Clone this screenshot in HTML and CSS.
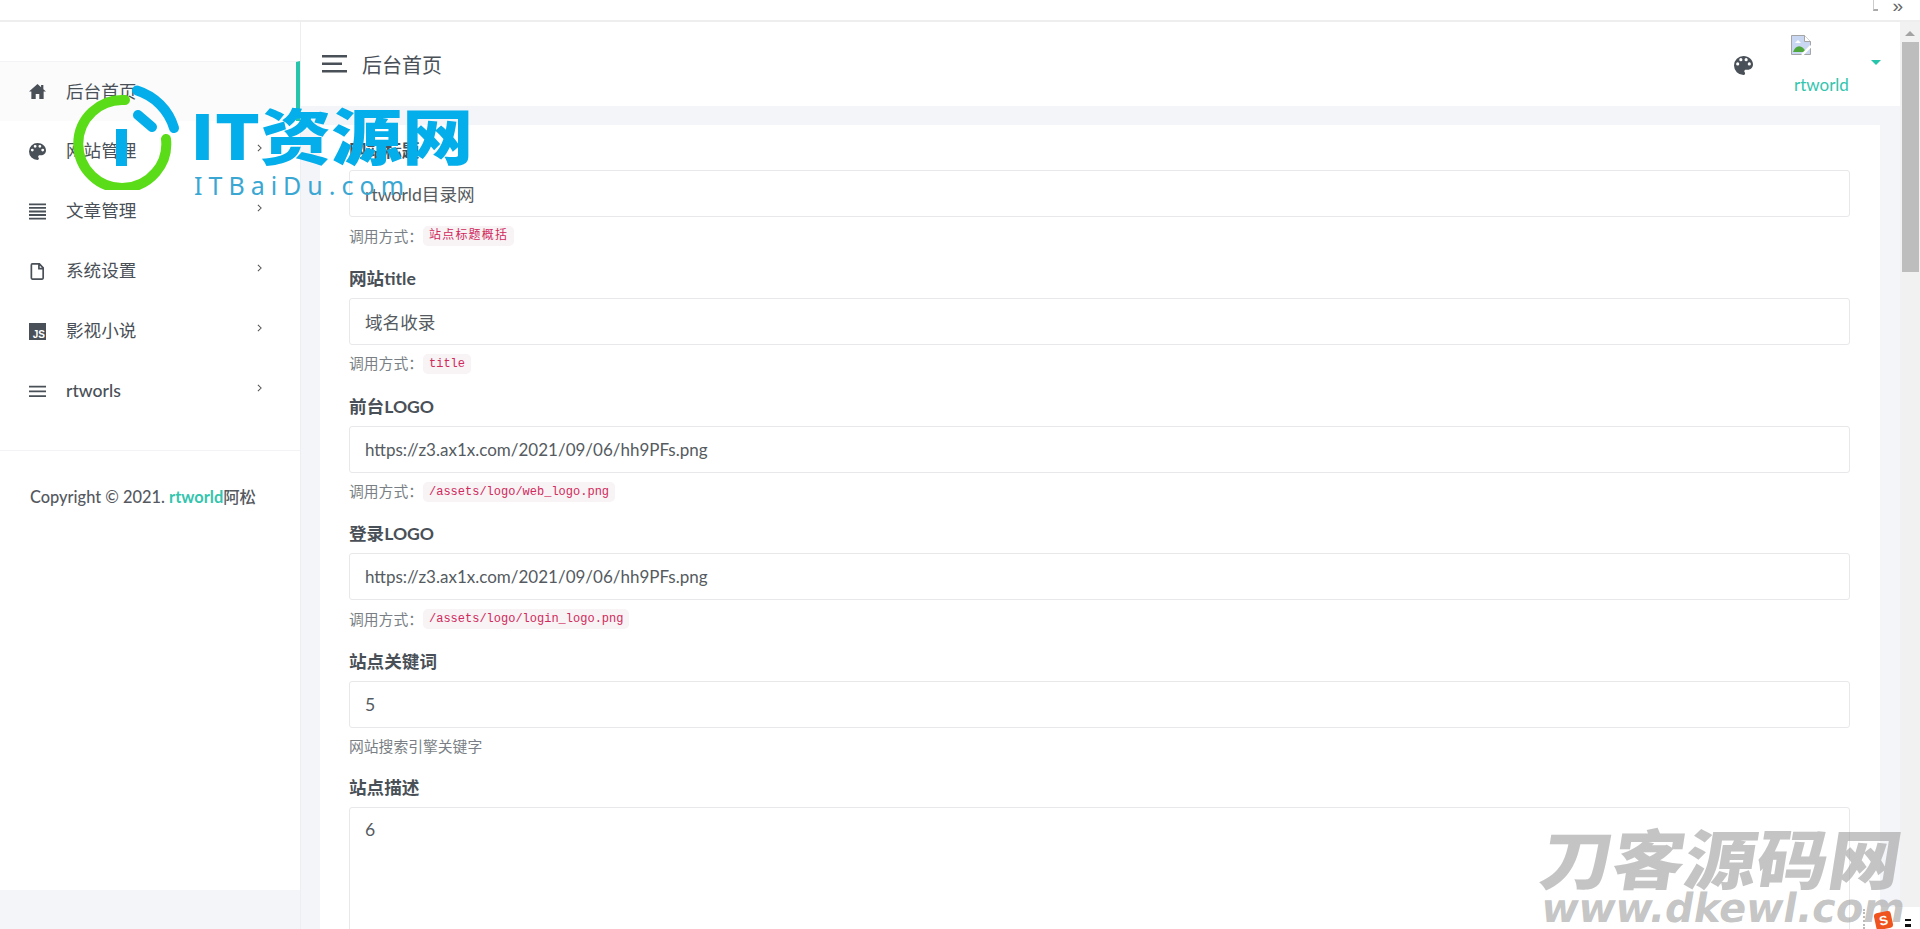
FILE: index.html
```html
<!DOCTYPE html>
<html lang="zh-CN">
<head>
<meta charset="utf-8">
<title>后台首页</title>
<link rel="stylesheet" href="styles.css">
</head>
<body>
<svg class="defs" width="0" height="0" aria-hidden="true">
  <symbol id="palette" viewBox="3 3 18 18"><path fill-rule="evenodd" d="M12 3a9 9 0 0 0 0 18c.83 0 1.5-.67 1.5-1.5 0-.39-.15-.74-.39-1.01-.23-.26-.38-.61-.38-.99 0-.83.67-1.5 1.5-1.5H16c2.76 0 5-2.24 5-5 0-4.42-4.03-8-9-8zm-5.5 9a1.5 1.5 0 1 1 0-3 1.5 1.5 0 0 1 0 3zm3-4a1.5 1.5 0 1 1 0-3 1.5 1.5 0 0 1 0 3zm5 0a1.5 1.5 0 1 1 0-3 1.5 1.5 0 0 1 0 3zm3 4a1.5 1.5 0 1 1 0-3 1.5 1.5 0 0 1 0 3z"/></symbol>
  <symbol id="chev" viewBox="0 0 6 10"><path d="M1 1l4 4-4 4" fill="none" stroke="#555" stroke-width="1.3"/></symbol>
</svg>
<div class="app">
  <div class="topbar">
    <span class="topbar-glitch"></span>
    <span class="topbar-more">»</span>
  </div>
  <div class="body-row">
    <aside class="sidebar">
      <div class="sidebar-panel">
        <nav class="nav">
          <a class="nav-item active">
            <svg class="nav-icon" viewBox="0 0 18 16"><path d="M9 0L0 8h2.5v8h4.600v-5.400h3.800V16h4.600V8H18l-2.800-2.500V1h-2.400v2.400z"/></svg>
            <span class="nav-text">后台首页</span>
          </a>
          <a class="nav-item">
            <svg class="nav-icon"><use href="#palette"/></svg>
            <span class="nav-text">网站管理</span>
            <svg class="chev"><use href="#chev"/></svg>
          </a>
          <a class="nav-item">
            <svg class="nav-icon" viewBox="0 0 18 17"><path d="M0 0h18v2H0zM0 3.700h18v2H0zM0 7.500h18v2H0zM0 11.200h18v2H0zM0 15h18v2H0z"/></svg>
            <span class="nav-text">文章管理</span>
            <svg class="chev"><use href="#chev"/></svg>
          </a>
          <a class="nav-item">
            <svg class="nav-icon" viewBox="0 0 18 18"><path d="M3.500 1h7.500l4 4.200V16a1 1 0 0 1-1 1H3.500a1 1 0 0 1-1-1V2a1 1 0 0 1 1-1zM10.500 1.500V6H15" fill="none" stroke="#495057" stroke-width="1.800"/></svg>
            <span class="nav-text">系统设置</span>
            <svg class="chev"><use href="#chev"/></svg>
          </a>
          <a class="nav-item">
            <span class="js-icon">JS</span>
            <span class="nav-text">影视小说</span>
            <svg class="chev"><use href="#chev"/></svg>
          </a>
          <a class="nav-item">
            <svg class="nav-icon" viewBox="0 0 18 12"><path d="M0 0h18v1.800H0zM0 5h18v1.800H0zM0 10h18v1.800H0z"/></svg>
            <span class="nav-text nav-latin">rtworls</span>
            <svg class="chev"><use href="#chev"/></svg>
          </a>
        </nav>
        <div class="copyright">Copyright © 2021. <span class="copyright-brand">rtworld</span>阿松</div>
      </div>
    </aside>
    <main class="main">
      <header class="header">
        <svg class="burger" viewBox="0 0 25 18"><path d="M0 0h25v2.400H0zM0 7.500h20v2.400H0zM0 15h25v2.400H0z"/></svg>
        <span class="header-title">后台首页</span>
        <svg class="header-palette"><use href="#palette"/></svg>
        <div class="user">
          <svg class="broken-img" viewBox="0 0 20 20">
            <path d="M.5.5h13l6 6v13H.5z" fill="#c9d7f2" stroke="#a5a5a5"/>
            <path d="M13.500.500v6h6" fill="#fff" stroke="#a5a5a5"/>
            <path d="M2 17c2-6 7-8 11-3l2 3z" fill="#4fa83d"/>
            <path d="M4 8l3-3 3 3z" fill="#fff"/>
            <path d="M11 20L20 11" stroke="#fff" stroke-width="2.500"/>
          </svg>
          <span class="user-name">rtworld</span>
        </div>
        <span class="caret"></span>
      </header>
      <div class="content">
        <form class="card">
          <div class="field">
            <label class="field-label">网站标题</label>
            <input class="field-input" value="rtworld目录网">
            <div class="help">调用方式：<code class="chip chip-cjk">站点标题概括</code></div>
          </div>
          <div class="field">
            <label class="field-label">网站title</label>
            <input class="field-input" value="域名收录">
            <div class="help">调用方式：<code class="chip">title</code></div>
          </div>
          <div class="field">
            <label class="field-label">前台LOGO</label>
            <input class="field-input field-url" value="https://z3.ax1x.com/2021/09/06/hh9PFs.png">
            <div class="help">调用方式：<code class="chip">/assets/logo/web_logo.png</code></div>
          </div>
          <div class="field">
            <label class="field-label">登录LOGO</label>
            <input class="field-input field-url" value="https://z3.ax1x.com/2021/09/06/hh9PFs.png">
            <div class="help">调用方式：<code class="chip">/assets/logo/login_logo.png</code></div>
          </div>
          <div class="field">
            <label class="field-label">站点关键词</label>
            <input class="field-input" value="5">
            <div class="help help-plain">网站搜索引擎关键字</div>
          </div>
          <div class="field">
            <label class="field-label">站点描述</label>
            <textarea class="field-textarea">6</textarea>
          </div>
        </form>
      </div>
    </main>
    <div class="scrollbar">
      <span class="scroll-up"></span>
      <span class="scroll-thumb"></span>
    </div>
  </div>

  <div class="logo-mark">
    <svg class="logo-icon" width="130" height="110" viewBox="60 80 130 110">
      <path d="M125 100A44 44 0 1 0 166 139" fill="none" stroke="#5bdc18" stroke-width="10" stroke-linecap="round"/>
      <path d="M137 90.500A56 56 0 0 1 174 128" fill="none" stroke="#03aeea" stroke-width="10" stroke-linecap="round"/>
      <path d="M138 115L152 127" fill="none" stroke="#03aeea" stroke-width="10" stroke-linecap="round"/>
      <path d="M116 129h11v37h-11z" fill="#03aeea"/>
    </svg>
    <div class="logo-title">IT资源网</div>
    <div class="logo-sub">ITBaiDu.com</div>
  </div>

  <div class="ime-back"></div>

  <div class="wm">
    <div class="wm-title">刀客源码网</div>
    <div class="wm-url">www.dkewl.com</div>
  </div>

  <div class="ime">
    <span class="ime-dots"></span>
    <span class="ime-s">S</span>
    <span class="ime-arrows"></span>
  </div>
</div>
</body>
</html>
```
FILE: styles.css
```css
* { box-sizing: border-box; }
html, body { margin: 0; height: 100%; overflow: hidden; }
body {
  font-family: "Lato", "Noto Sans CJK SC", sans-serif;
  color: #495057;
  background: #fff;
}
.defs { position: absolute; }
.app { position: relative; width: 1920px; height: 929px; overflow: hidden; display: flex; flex-direction: column; }

.topbar { height: 22px; border-bottom: 2px solid #eeeeee; background: #fff; display: flex; justify-content: flex-end; align-items: flex-start; padding-right: 17px; gap: 14px; }
.topbar-glitch { width: 5px; height: 11px; border-left: 1px solid #ccc; border-bottom: 2px solid #aaa; }
.topbar-more { font: 19px/12px "Liberation Sans", sans-serif; color: #666; }

.body-row { flex: 1; display: flex; min-height: 0; }

.sidebar { width: 301px; flex: none; background: #f4f5f9; border-right: 1px solid #eceef3; }
.sidebar-panel { height: 868px; background: #fff; padding-top: 39px; }
.nav { padding-bottom: 29px; border-bottom: 1px solid #f3f3f5; }
.nav-item { height: 60px; display: flex; align-items: center; padding: 0 29px; position: relative; color: #495057; }
.nav-item.active { background: #fbfbfc; border-top: 1px solid #f3f3f5; border-right: 4px solid #27c4ac; }
.nav-icon { width: 17px; height: 17px; fill: #495057; flex: none; }
.nav-text { margin-left: 20px; font-size: 17.6px; flex: 1; line-height: 24px; }
.nav-latin { font-weight: 500; }
.chev { width: 5px; height: 8px; flex: none; margin: -6px 9px 0 0; }
.js-icon { width: 17px; height: 17px; flex: none; background: #495057; color: #fff; font: bold 10px/9px "Liberation Sans", sans-serif; display: flex; align-items: flex-end; justify-content: flex-end; padding: 0 1px 1px 0; }
.copyright { padding: 34px 30px 0; font-size: 16.4px; font-weight: 500; line-height: 24px; color: #55595f; white-space: nowrap; }
.copyright-brand { color: #33c5ae; font-weight: 700; }

.main { flex: 1; min-width: 0; background: #f4f5f9; display: flex; flex-direction: column; }
.header { height: 84px; flex: none; background: #fff; display: flex; align-items: center; padding: 0 19px 0 21px; }
.burger { width: 25px; height: 18px; fill: #495057; flex: none; }
.header-title { margin-left: 15px; font-size: 20px; flex: 1; margin-top: 1px; }
.header-palette { width: 19px; height: 19px; fill: #495057; margin-top: 2px; margin-right: 4px; flex: none; }
.user { width: 56px; margin-left: 37px; display: flex; flex-direction: column; align-items: flex-start; color: #33c5ae; }
.broken-img { width: 20px; height: 20px; display: block; margin: 0 0 0 -3px; }
.user-name { display: block; font-size: 17px; line-height: 24px; margin-top: 18px; margin-bottom: -4px; }
.caret { width: 0; height: 0; border-left: 5px solid transparent; border-right: 5px solid transparent; border-top: 5px solid #27c4ac; margin-left: 21px; margin-top: -3px; flex: none; }

.content { flex: 1; padding: 19px 20px 0 19px; min-height: 0; overflow: hidden; }
.card { background: #fff; height: 900px; padding: 14px 30px 0 29px; }
.field { margin-bottom: 20.8px; }
.field-label { display: block; font-size: 17.6px; font-weight: 700; line-height: 24px; margin-bottom: 7px; color: #495057; }
.field-input, .field-textarea {
  display: block; width: 100%; border: 1px solid #e8e8ea; border-radius: 3px; background: #fff;
  font: 17.6px "Lato", "Noto Sans CJK SC", sans-serif; color: #555b61; padding: 0 15px; outline: none;
}
.field-input { height: 47px; }
.field-url { font-size: 17px; }
.field-textarea { height: 200px; padding-top: 10px; resize: none; line-height: 24px; }
.help { margin-top: 9px; display: flex; align-items: center; font-size: 14.8px; line-height: 17px; color: #7a7f85; height: 20px; }
.help-plain { height: 18px; line-height: 18px; }
.chip { font: 12px/20px "Liberation Mono", "Noto Sans CJK SC", monospace; color: #d0295b; background: #f8f3f5; border-radius: 5px; padding: 0 6px; height: 20px; }
.chip-cjk { letter-spacing: 1.2px; }

.scrollbar { width: 20px; flex: none; background: #f1f1f1; display: flex; flex-direction: column; align-items: center; }
.scroll-up { width: 0; height: 0; margin-top: 9px; border-left: 5px solid transparent; border-right: 5px solid transparent; border-bottom: 5px solid #a3a3a3; }
.scroll-thumb { width: 17px; height: 230px; background: #bdbdbd; margin-top: 6px; }

.logo-mark { position: absolute; left: 60px; top: 80px; width: 430px; height: 120px; }
.logo-icon { position: absolute; left: 0; top: 0; }
.logo-title { position: absolute; left: 130px; top: 18px; font: 900 71px/70px "Noto Sans CJK SC", sans-serif; color: #03aeea; white-space: nowrap; transform: scaleY(0.87); }
.logo-sub { position: absolute; left: 134px; top: 90px; font: 400 25px/30px "Noto Sans", sans-serif; letter-spacing: 6px; color: #3aa7d3; white-space: nowrap; }

.wm { position: absolute; left: 1542px; top: 820px; width: 370px; pointer-events: none; color: rgba(160, 160, 160, 0.62); }
.wm-title { font: 900 72px/72px "Noto Sans CJK SC", sans-serif; transform: skewX(-9deg) scaleY(0.9); white-space: nowrap; }
.wm-url { font: 700 40px/32px "DejaVu Sans", sans-serif; transform: skewX(-10deg); white-space: nowrap; }

.ime-back { position: absolute; right: 0; bottom: 0; width: 57px; height: 22px; background: #fff; }
.ime { position: absolute; right: 0; bottom: 0; width: 57px; height: 22px; display: flex; align-items: flex-end; }
.ime-dots { width: 2px; height: 20px; border-left: 2px dotted #bbb; }
.ime-s { width: 17px; height: 17px; margin-left: 10px; background: #f0541e; color: #fff; font: bold 13px/17px "Liberation Sans", sans-serif; text-align: center; border-radius: 3px; transform: rotate(-12deg); }
.ime-arrows { width: 6px; height: 8px; margin-left: 13px; margin-bottom: 2px; border-top: 2px solid #111; border-bottom: 3px solid #111; }
```
